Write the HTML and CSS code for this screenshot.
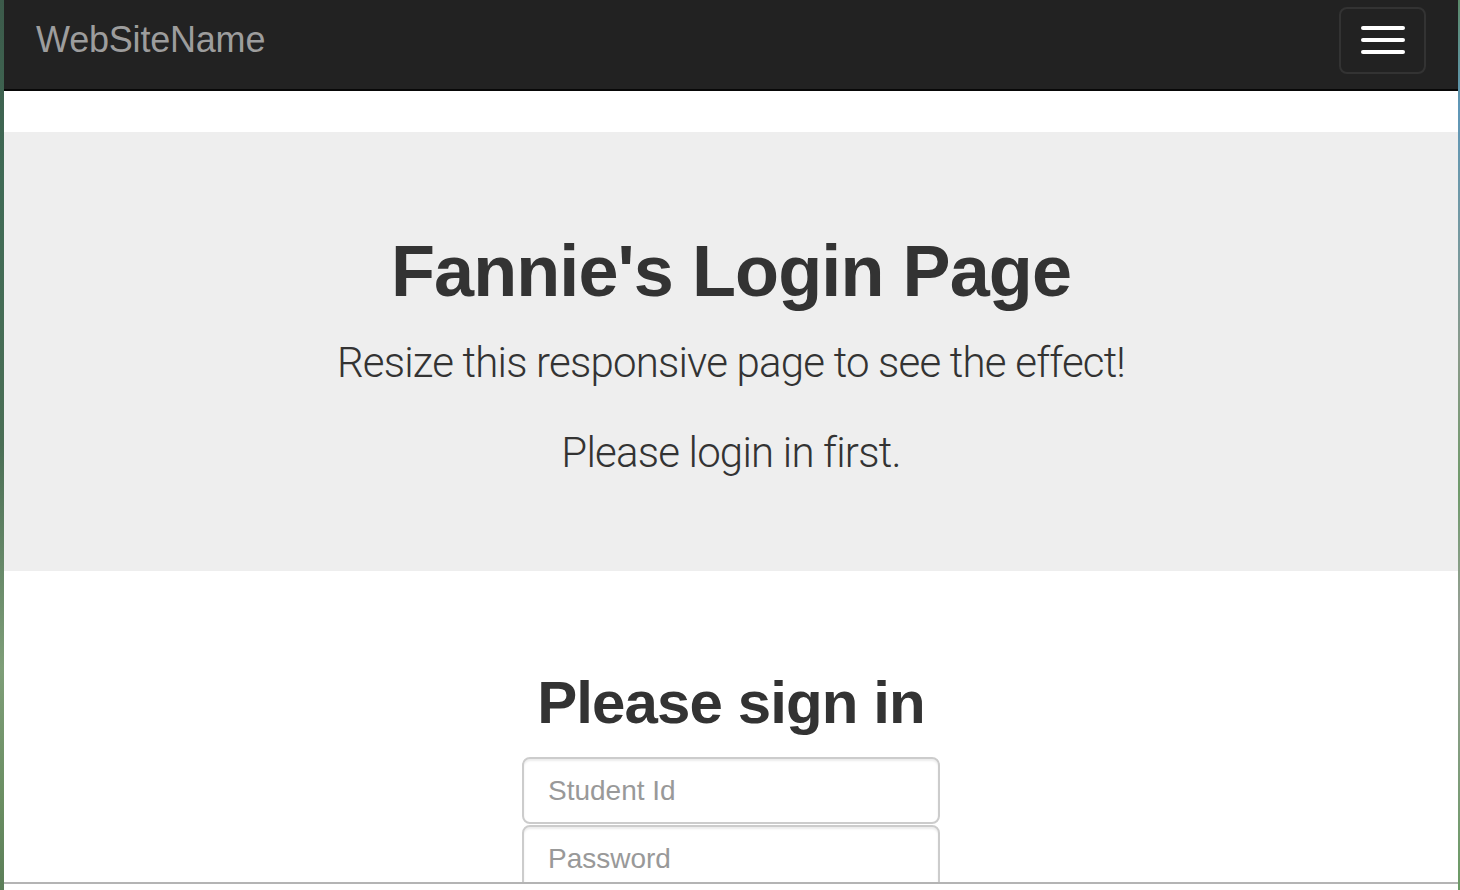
FILE: index.html
```html
<!DOCTYPE html>
<html lang="en">
<head>
<meta charset="utf-8">
<title>Fannie's Login Page</title>
<link rel="stylesheet" href="styles.css">
</head>
<body>
<div class="screen">
  <div class="edge-left"></div>
  <div class="page">
    <div class="viewport">
      <nav class="navbar">
        <a class="brand" href="#">WebSiteName</a>
        <button class="toggle" type="button" aria-label="Toggle navigation">
          <span class="bar"></span>
          <span class="bar"></span>
          <span class="bar"></span>
        </button>
      </nav>
      <div class="spacer"></div>
      <section class="jumbotron">
        <h1 class="title">Fannie's Login Page</h1>
        <p class="lead">Resize this responsive page to see the effect!</p>
        <p class="lead">Please login in first.</p>
      </section>
      <form class="signin">
        <h2 class="signin-heading">Please sign in</h2>
        <input class="field" type="text" placeholder="Student Id">
        <input class="field" type="password" placeholder="Password">
      </form>
    </div>
    <div class="bottom-rule"></div>
    <div class="bottom-gap"></div>
  </div>
  <div class="edge-right"></div>
</div>
</body>
</html>
```

FILE: styles.css
```css
html, body {
  margin: 0;
  padding: 0;
  background: #ffffff;
}

.screen {
  display: flex;
  width: 1460px;
  height: 890px;
  overflow: hidden;
}

.edge-left {
  width: 4px;
  flex: none;
  background: linear-gradient(180deg, #3c5a4a 0%, #3f6a55 20%, #4a6e55 50%, #7e9e78 75%, #6a8e62 90%, #5b7e58 100%);
}

.edge-right {
  width: 2px;
  flex: none;
  background: linear-gradient(180deg, #5c8a6a 0%, #5f97b8 12%, #8a9a8a 40%, #6f9a6a 55%, #9aa09a 70%, #6a9a64 100%);
}

.page {
  flex: 1;
  display: flex;
  flex-direction: column;
  min-width: 0;
}

.viewport {
  flex: 1;
  overflow: hidden;
  background: #ffffff;
}

.bottom-rule {
  height: 2px;
  background: #b4b4b4;
  flex: none;
}

.bottom-gap {
  height: 6px;
  background: #ffffff;
  flex: none;
}

/* Navbar */
.navbar {
  height: 89px;
  background: #222222;
  border-bottom: 2px solid #080808;
  display: flex;
  align-items: center;
  justify-content: space-between;
  padding: 0 32px 0 32px;
}

.brand {
  font-family: "Liberation Sans", Arial, sans-serif;
  font-size: 36px;
  color: #9d9d9d;
  text-decoration: none;
  margin-top: -10px;
  letter-spacing: -0.2px;
}

.toggle {
  width: 87px;
  height: 67px;
  margin-top: -9px;
  background: transparent;
  border: 2px solid #333333;
  border-radius: 8px;
  display: flex;
  flex-direction: column;
  align-items: center;
  justify-content: center;
  gap: 8px;
  padding: 0;
}

.bar {
  display: block;
  width: 44px;
  height: 4px;
  border-radius: 2px;
  background: #ffffff;
}

.spacer {
  height: 41px;
}

/* Jumbotron */
.jumbotron {
  background: #eeeeee;
  padding: 60px 30px 58px;
  text-align: center;
  color: #333333;
}

.title {
  font-family: "Liberation Sans", Arial, sans-serif;
  font-weight: 700;
  font-size: 72px;
  line-height: 79px;
  margin: 40px 0 22px;
  letter-spacing: -0.9px;
}

.lead {
  font-family: Roboto, "Liberation Sans", sans-serif;
  font-weight: 300;
  font-size: 42px;
  line-height: 60px;
  margin: 0 0 30px;
  letter-spacing: -0.8px;
}

/* Sign-in form */
.signin {
  width: 418px;
  margin: 0 auto;
  padding-top: 99px;
  display: flex;
  flex-direction: column;
  align-items: stretch;
}

.signin-heading {
  font-family: "Liberation Sans", Arial, sans-serif;
  font-weight: 700;
  font-size: 60px;
  line-height: 66px;
  color: #333333;
  text-align: center;
  margin: 0 -40px 21px;
  letter-spacing: -0.9px;
}

.field {
  box-sizing: border-box;
  height: 67px;
  margin: 0 0 1px;
  border: 2px solid #cccccc;
  border-radius: 8px;
  padding: 0 24px;
  font-family: "Liberation Sans", Arial, sans-serif;
  font-size: 28px;
  color: #555555;
  background: #ffffff;
  box-shadow: inset 0 2px 2px rgba(0, 0, 0, 0.075);
  outline: none;
}

.field::placeholder {
  color: #999999;
}
```
